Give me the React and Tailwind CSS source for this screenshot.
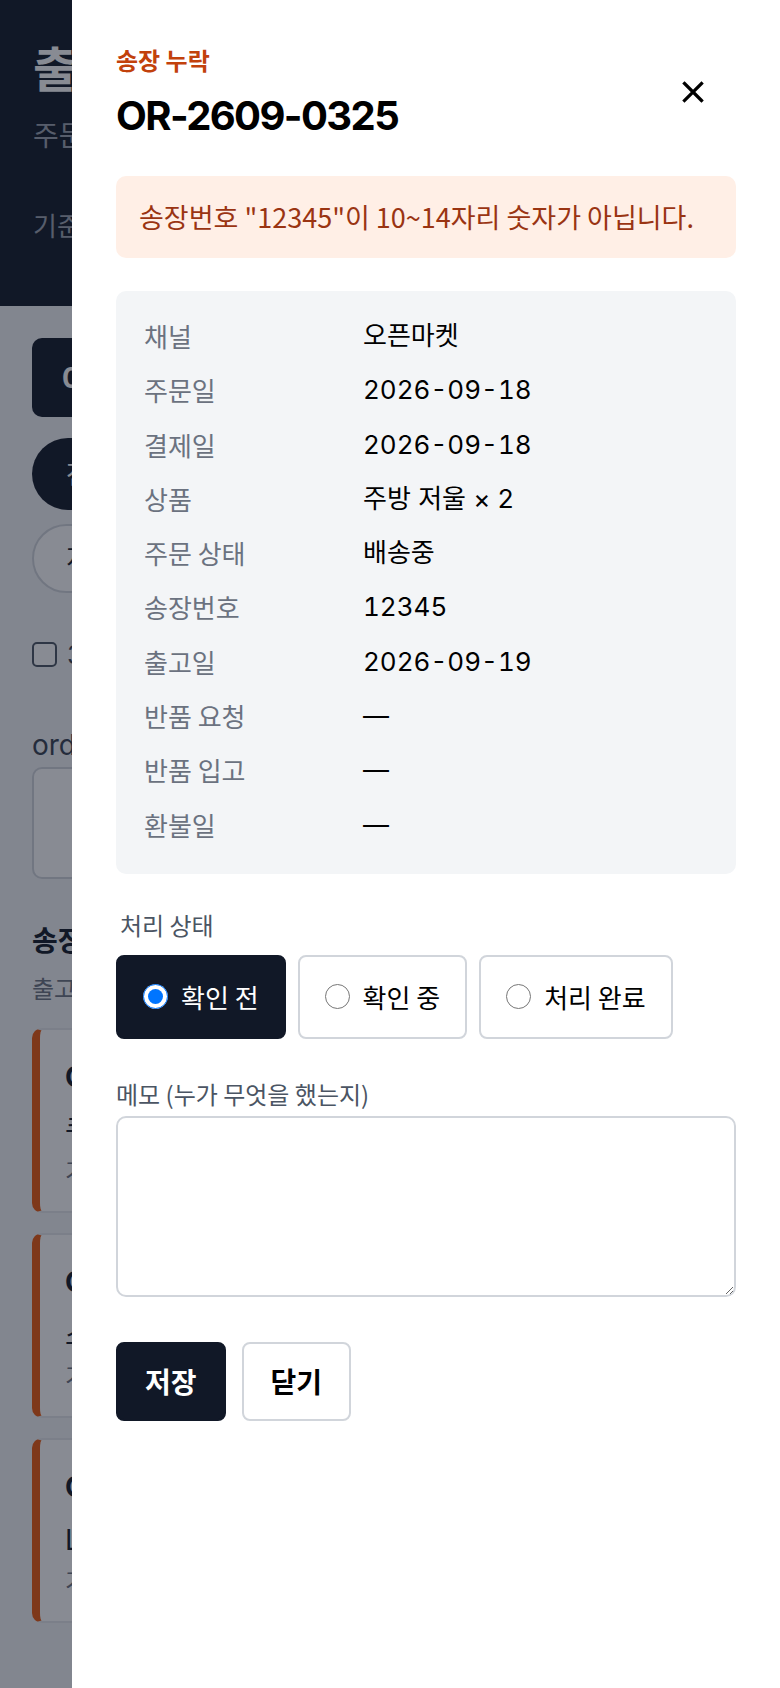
const rows = [
  ['채널', '오픈마켓'],
  ['주문일', '2026-09-18', true],
  ['결제일', '2026-09-18', true],
  ['상품', '주방 저울 × 2'],
  ['주문 상태', '배송중'],
  ['송장번호', '12345', true],
  ['출고일', '2026-09-19', true],
  ['반품 요청', '—'],
  ['반품 입고', '—'],
  ['환불일', '—'],
];

const statuses = ['확인 전', '확인 중', '처리 완료'];

const BackgroundPage = () => {
  return (
    <div className="min-h-[1688px] bg-[#f3f4f6]">
      {/* Top header */}
      <div className="h-[306px] bg-[#111827] px-[33px] pt-[38px]">
        <h1 className="text-[48px] font-bold leading-[64px] text-white">출고 예외 처리</h1>
        <p className="mt-[14px] text-[28px] leading-[40px] text-[#9ca3af]">주문 데이터 기준 예외 목록</p>
        <p className="mt-[52px] text-[26px] leading-[38px] text-[#9ca3af]">기준일 2026-09-19</p>
      </div>

      <div className="px-[32px] pt-[32px]">
        <div className="flex h-[79px] w-[300px] items-center rounded-[10px] bg-[#111827] px-[30px] text-[28px] font-bold text-white">
          0건
        </div>
        <div className="mt-[21px] flex h-[72px] w-[160px] items-center rounded-full bg-[#111827] px-[34px] text-[26px] text-white">
          전체
        </div>
        <div className="mt-[14px] flex h-[69px] w-[160px] items-center rounded-full border-2 border-[#d1d5db] bg-white px-[32px] text-[26px] text-[#111827]">
          지연
        </div>
        <label className="mt-[42px] flex items-center gap-[10px] text-[26px] text-[#374151]">
          <span className="h-[25px] w-[25px] rounded-[5px] border-2 border-[#4b5563] bg-white" />
          3일 이상 지연만
        </label>
        <div className="mt-[53px] text-[28px] leading-[36px] text-[#374151]">order_id</div>
        <div className="mt-[4px] h-[112px] w-[600px] rounded-[10px] border-2 border-[#d1d5db] bg-white" />
        <div className="mt-[44px] text-[28px] font-bold leading-[36px] text-[#111827]">송장 누락</div>
        <div className="mt-[15px] text-[24px] leading-[32px] text-[#6b7280]">출고 후 송장번호가 없는 주문</div>
        <div className="mt-[22px] flex flex-col gap-[20px]">
          {['쿠팡', '스마트스토어', 'LF몰'].map((c) => (
            <div
              key={c}
              className="h-[185px] w-[640px] rounded-[10px] border-2 border-l-8 border-[#e5e7eb] border-l-[#ea580c] bg-white pl-[25px] pt-[30px]"
            >
              <div className="text-[28px] font-bold leading-[34px] text-[#111827]">OR-2609-0301</div>
              <div className="mt-[18px] text-[28px] leading-[36px] text-[#111827]">{c} · 배송중</div>
              <div className="mt-[8px] text-[24px] leading-[32px] text-[#6b7280]">기준 2026-09-19</div>
            </div>
          ))}
        </div>
      </div>
    </div>
  );
};

const App = () => {
  return (
    <div className="relative min-h-[1688px] overflow-hidden font-['Inter','Noto_Sans_CJK_KR',sans-serif]">
      <BackgroundPage />

      {/* Dim overlay */}
      <div className="absolute inset-0 bg-[#111827]/50" />

      {/* Drawer */}
      <aside className="absolute right-0 top-0 flex h-full w-[708px] flex-col bg-white px-[44px] pt-[44px]">
        <div className="flex items-center justify-between">
          <div>
            <p className="font-['Noto_Sans_CJK_KR',sans-serif] text-[24px] font-semibold leading-[32px] text-[#c2410c]">송장 누락</p>
            <h2 className="mt-[16px] text-[40px] font-bold leading-[48px] tracking-[-0.04em] text-black">OR-2609-0325</h2>
          </div>
          <button className="mr-[21px] p-[11px] text-black">
            <svg width="22" height="22" viewBox="0 0 22 22" fill="none" stroke="currentColor" strokeWidth="3.2" strokeLinecap="square">
              <path d="M2.5 2.5l17 17M19.5 2.5l-17 17" />
            </svg>
          </button>
        </div>

        <div className="mt-[36px] rounded-[10px] bg-[#ffefe6] px-[23px] py-[24px] font-['Noto_Sans_CJK_KR',sans-serif] text-[27px] leading-[34px] text-[#9a3412]">
          송장번호 "12345"이 10~14자리 숫자가 아닙니다.
        </div>

        <dl className="mt-[33px] grid grid-cols-[219px_1fr] gap-y-[16.3px] rounded-[10px] bg-[#f3f5f7] px-[28px] pb-[30px] pt-[26px] text-[26px] leading-[38px]">
          {rows.map(([k, v, num]) => (
            <div key={k} className="contents">
              <dt className="font-['Noto_Sans_CJK_KR',sans-serif] text-[#6b7280]">{k}</dt>
              <dd className={num ? 'tabular-nums text-black' : 'text-black'}>{v}</dd>
            </div>
          ))}
        </dl>

        <fieldset className="mt-[34px]">
          <legend className="pl-[4px] font-['Noto_Sans_CJK_KR',sans-serif] text-[24px] leading-[34px] text-[#4b5563]">처리 상태</legend>
          <div className="mt-[13px] flex gap-[12px]">
            {statuses.map((s, i) => (
              <label
                key={s}
                className={
                  i === 0
                    ? 'flex items-center gap-[13px] rounded-[8px] border-2 border-[#111827] bg-[#111827] px-[25px] py-[22.5px] text-[26px] leading-[35px] text-white'
                    : 'flex items-center gap-[13px] rounded-[8px] border-2 border-[#d1d5db] bg-white px-[25px] py-[22.5px] text-[26px] leading-[35px] text-black'
                }
              >
                <input type="radio" name="status" defaultChecked={i === 0} className="m-0 h-[25px] w-[25px]" />
                <span className="font-['Noto_Sans_CJK_KR',sans-serif]">{s}</span>
              </label>
            ))}
          </div>
        </fieldset>

        <label className="mt-[38px] block font-['Noto_Sans_CJK_KR',sans-serif] text-[24px] leading-[34px] text-[#4b5563]">
          메모 (누가 무엇을 했는지)
        </label>
        <textarea className="mt-[5px] block h-[181px] w-full rounded-[10px] border-2 border-[#d1d5db] bg-white p-[16px] text-[26px]" />

        <div className="mt-[45px] flex gap-[16px] font-['Noto_Sans_CJK_KR',sans-serif]">
          <button className="rounded-[8px] border-2 border-[#111827] bg-[#111827] px-[27px] py-[20px] text-[28px] font-bold leading-[35px] text-white">
            저장
          </button>
          <button className="rounded-[8px] border-2 border-[#d1d5db] bg-white px-[27px] py-[20px] text-[28px] font-bold leading-[35px] text-black">
            닫기
          </button>
        </div>
      </aside>
    </div>
  );
};

export default App;
